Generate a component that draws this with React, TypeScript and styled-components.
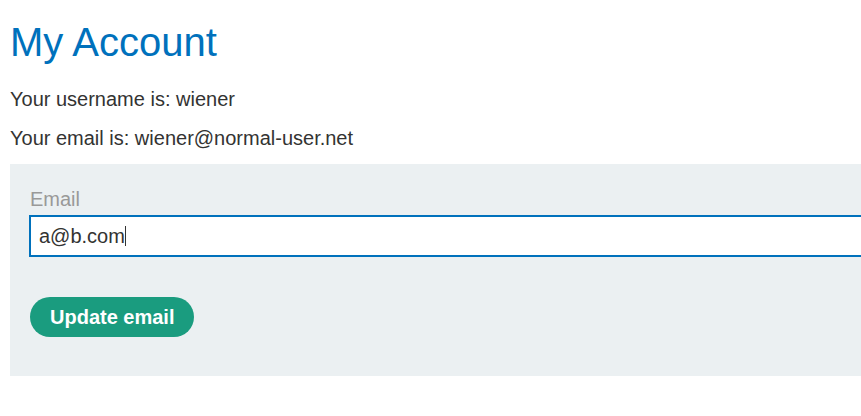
import React from "react";
import styled, { createGlobalStyle } from "styled-components";

const GlobalStyle = createGlobalStyle`
  html, body {
    margin: 0;
    padding: 0;
    background: #ffffff;
    overflow: hidden;
  }
  body {
    font-family: "Liberation Sans", Arial, sans-serif;
    color: #333332;
  }
`;

const Page = styled.div`
  width: 861px;
  height: 416px;
  padding: 0 0 0 10px;
  box-sizing: border-box;
  overflow: hidden;
`;

const Title = styled.h1`
  margin: 0;
  padding-top: 19px;
  font-size: 40px;
  line-height: 46px;
  font-weight: 400;
  color: #0071bc;
`;

const InfoLine = styled.p<{ $gap: number }>`
  margin: 0;
  font-size: 20px;
  line-height: 23px;
  padding-top: ${(p) => p.$gap}px;
`;

const Panel = styled.form`
  margin-top: 14px;
  width: 880px;
  height: 212px;
  background: #ebf0f2;
  padding: 24px 0 0 19px;
  box-sizing: border-box;
  display: flex;
  flex-direction: column;
  align-items: flex-start;
`;

const Label = styled.label`
  font-size: 20px;
  line-height: 23px;
  color: #999999;
  padding-left: 1px;
`;

const InputBox = styled.div`
  margin-top: 4px;
  width: 900px;
  height: 42px;
  box-sizing: border-box;
  border: 2px solid #0071bc;
  background: #ffffff;
  padding: 0 8px;
  display: flex;
  align-items: center;
  font-size: 20px;
  color: #333332;
`;

const Caret = styled.span`
  display: inline-block;
  width: 1px;
  height: 20px;
  background: #333332;
`;

const Button = styled.button`
  margin-top: 40px;
  margin-left: 1px;
  height: 40px;
  padding: 0 20px;
  border: none;
  border-radius: 20px;
  background: #1a9c7f;
  color: #ffffff;
  font-family: "Liberation Sans", Arial, sans-serif;
  font-weight: 700;
  font-size: 20px;
  cursor: pointer;
`;

export default function App() {
  return (
    <>
      <GlobalStyle />
      <Page>
        <Title>My Account</Title>
        <InfoLine $gap={23}>Your username is: wiener</InfoLine>
        <InfoLine $gap={16}>Your email is: wiener@normal-user.net</InfoLine>
        <Panel onSubmit={(e) => e.preventDefault()}>
          <Label>Email</Label>
          <InputBox>
            a@b.com
            <Caret />
          </InputBox>
          <Button type="submit">Update email</Button>
        </Panel>
      </Page>
    </>
  );
}
